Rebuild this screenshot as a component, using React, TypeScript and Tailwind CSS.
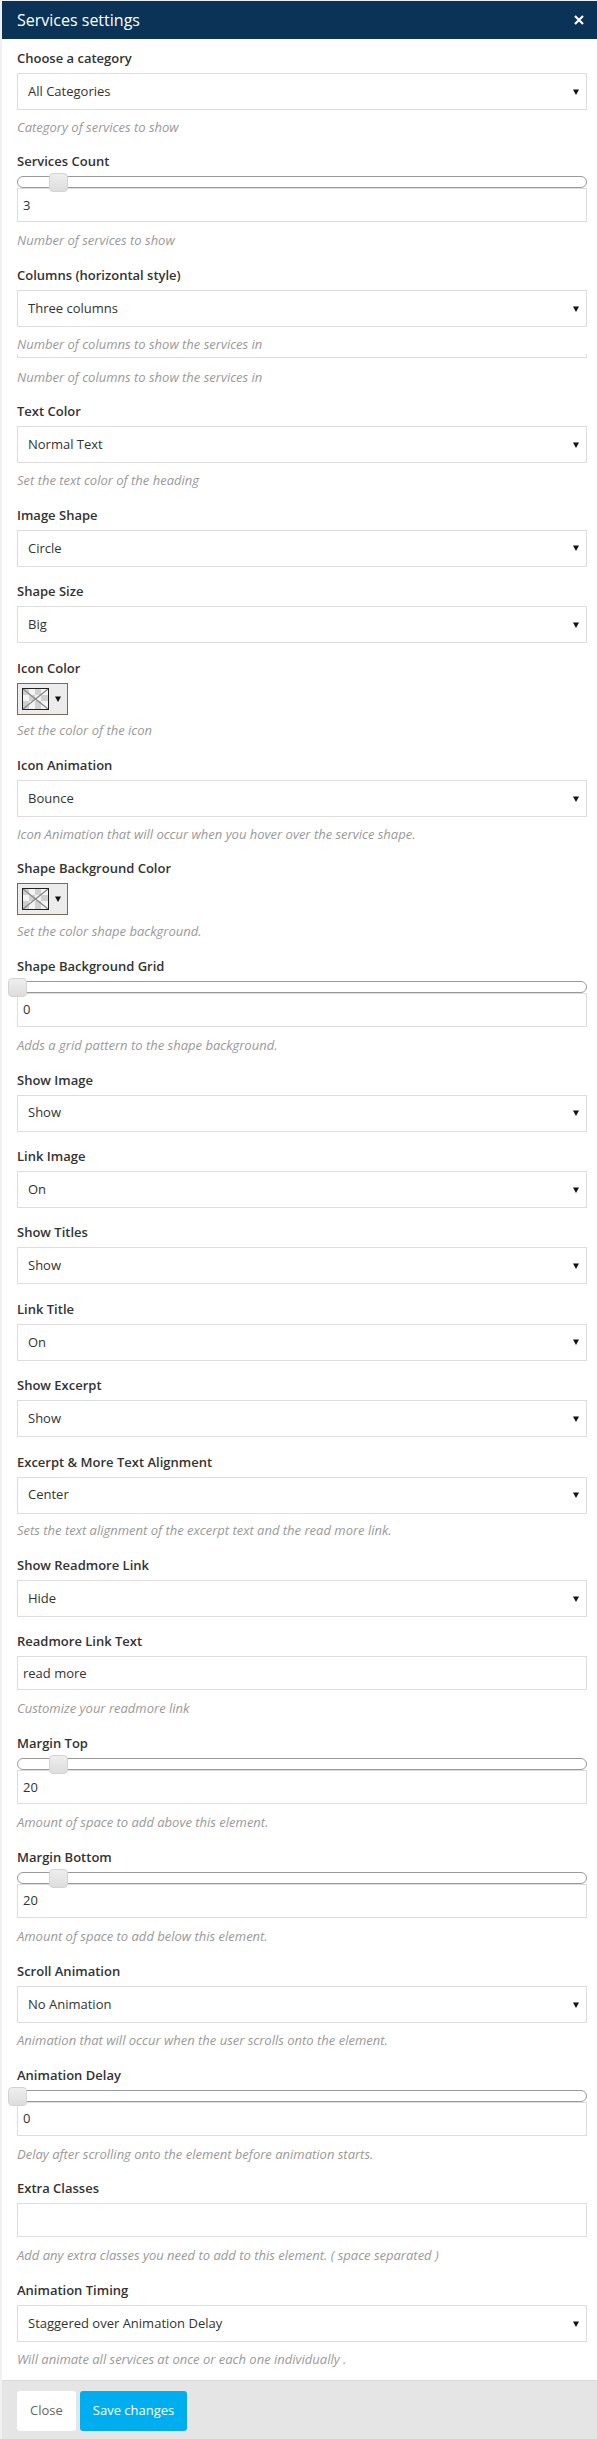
import React from "react";

function Label({ children }: { children: React.ReactNode }) {
  return (
    <div className="text-[13px] font-semibold leading-[18px] text-[#333] mb-[6px]">
      {children}
    </div>
  );
}

function Desc({ children, extra = "mt-[7.5px]" }: { children: React.ReactNode; extra?: string }) {
  return (
    <div className={"text-[13px] italic leading-[19.5px] text-[#999] " + extra}>{children}</div>
  );
}

function Arrow() {
  return (
    <svg width="6" height="6" viewBox="0 0 6 6" className="shrink-0">
      <path d="M0 0.5H6L3 6Z" fill="#111" />
    </svg>
  );
}

function Select({ value }: { value: string }) {
  return (
    <div className="h-[37px] border border-[#ddd] bg-white flex items-center pl-[10px] pr-[7px] text-[13px] text-[#333]">
      <span className="flex-1">{value}</span>
      <Arrow />
    </div>
  );
}

function TextInput({ value }: { value: string }) {
  return (
    <div className="h-[34px] border border-[#ddd] bg-white flex items-center pl-[5px] text-[13px] text-[#333]">
      {value}
    </div>
  );
}

function Slider({ handle }: { handle: string }) {
  return (
    <div className="relative z-10 h-[12px] border border-[#999] rounded-[6px] bg-white">
      <div
        className={
          "absolute top-[-4px] w-[19px] h-[19px] rounded-[4px] border border-[#d3d3d3] bg-gradient-to-b from-[#eeeeee] to-[#dddddd] " +
          handle
        }
      />
    </div>
  );
}

function ColorPicker() {
  return (
    <div className="w-[51px] h-[32px] border border-[#7a6a58] bg-[#ececec] flex items-center pl-[4px] gap-[6px]">
      <svg width="27" height="22" viewBox="0 0 27 22" className="shrink-0">
        <rect x="0" y="0" width="27" height="22" fill="#f4f4f4" />
        <rect x="1" y="1" width="6" height="6" fill="#cfcfcf" />
        <rect x="13" y="1" width="6" height="6" fill="#cfcfcf" />
        <rect x="7" y="7" width="6" height="6" fill="#cfcfcf" />
        <rect x="19" y="7" width="7" height="6" fill="#cfcfcf" />
        <rect x="1" y="13" width="6" height="8" fill="#cfcfcf" />
        <rect x="13" y="13" width="6" height="8" fill="#cfcfcf" />
        <line x1="1" y1="1" x2="26" y2="21" stroke="#8a8a8a" strokeWidth="1.4" />
        <line x1="26" y1="1" x2="1" y2="21" stroke="#8a8a8a" strokeWidth="1.4" />
        <rect x="0.5" y="0.5" width="26" height="21" fill="none" stroke="#222" strokeWidth="1" />
      </svg>
      <Arrow />
    </div>
  );
}

function Group({ children, last = false }: { children: React.ReactNode; last?: boolean }) {
  return <div className={last ? "" : "mb-[15.4px]"}>{children}</div>;
}

export default function App() {
  return (
    <div className="min-h-screen bg-[#f0f0f0] pt-[1px] pl-[2px] font-['Open_Sans',sans-serif]">
      <div className="bg-white">
        <div className="h-[38px] bg-[#0a3357] flex items-center justify-between pl-[15px] pr-[13px]">
          <span className="text-[16px] text-white">Services settings</span>
          <svg width="10" height="10" viewBox="0 0 10 10">
            <path d="M1 1L9 9M9 1L1 9" stroke="#fff" strokeWidth="2.2" />
          </svg>
        </div>

        <div className="pt-[10px] pl-[15px] pr-[10px] pb-[10.5px]">
          <Group>
            <Label>Choose a category</Label>
            <Select value="All Categories" />
            <Desc>Category of services to show</Desc>
          </Group>

          <Group>
            <Label>Services Count</Label>
            <Slider handle="left-[31px]" />
            <TextInput value="3" />
            <Desc extra="mt-[9px]">Number of services to show</Desc>
          </Group>

          <Group>
            <Label>Columns (horizontal style)</Label>
            <Select value="Three columns" />
            <Desc>Number of columns to show the services in</Desc>
            <div className="h-[4px] border-x border-b border-[#ddd]" />
            <Desc extra="mt-[9.3px]">Number of columns to show the services in</Desc>
          </Group>

          <Group>
            <Label>Text Color</Label>
            <Select value="Normal Text" />
            <Desc>Set the text color of the heading</Desc>
          </Group>

          <Group>
            <Label>Image Shape</Label>
            <Select value="Circle" />
          </Group>

          <Group>
            <Label>Shape Size</Label>
            <Select value="Big" />
          </Group>

          <Group>
            <Label>Icon Color</Label>
            <ColorPicker />
            <Desc extra="mt-[6.5px]">Set the color of the icon</Desc>
          </Group>

          <Group>
            <Label>Icon Animation</Label>
            <Select value="Bounce" />
            <Desc>Icon Animation that will occur when you hover over the service shape.</Desc>
          </Group>

          <Group>
            <Label>Shape Background Color</Label>
            <ColorPicker />
            <Desc extra="mt-[6.5px]">Set the color shape background.</Desc>
          </Group>

          <Group>
            <Label>Shape Background Grid</Label>
            <Slider handle="left-[-10px]" />
            <TextInput value="0" />
            <Desc extra="mt-[9px]">Adds a grid pattern to the shape background.</Desc>
          </Group>

          <Group>
            <Label>Show Image</Label>
            <Select value="Show" />
          </Group>

          <Group>
            <Label>Link Image</Label>
            <Select value="On" />
          </Group>

          <Group>
            <Label>Show Titles</Label>
            <Select value="Show" />
          </Group>

          <Group>
            <Label>Link Title</Label>
            <Select value="On" />
          </Group>

          <Group>
            <Label>Show Excerpt</Label>
            <Select value="Show" />
          </Group>

          <Group>
            <Label>Excerpt &amp; More Text Alignment</Label>
            <Select value="Center" />
            <Desc>Sets the text alignment of the excerpt text and the read more link.</Desc>
          </Group>

          <Group>
            <Label>Show Readmore Link</Label>
            <Select value="Hide" />
          </Group>

          <Group>
            <Label>Readmore Link Text</Label>
            <TextInput value="read more" />
            <Desc extra="mt-[9px]">Customize your readmore link</Desc>
          </Group>

          <Group>
            <Label>Margin Top</Label>
            <Slider handle="left-[31px]" />
            <TextInput value="20" />
            <Desc extra="mt-[9px]">Amount of space to add above this element.</Desc>
          </Group>

          <Group>
            <Label>Margin Bottom</Label>
            <Slider handle="left-[31px]" />
            <TextInput value="20" />
            <Desc extra="mt-[9px]">Amount of space to add below this element.</Desc>
          </Group>

          <Group>
            <Label>Scroll Animation</Label>
            <Select value="No Animation" />
            <Desc>Animation that will occur when the user scrolls onto the element.</Desc>
          </Group>

          <Group>
            <Label>Animation Delay</Label>
            <Slider handle="left-[-10px]" />
            <TextInput value="0" />
            <Desc extra="mt-[9px]">Delay after scrolling onto the element before animation starts.</Desc>
          </Group>

          <Group>
            <Label>Extra Classes</Label>
            <TextInput value="" />
            <Desc extra="mt-[9px]">Add any extra classes you need to add to this element. ( space separated )</Desc>
          </Group>

          <Group last>
            <Label>Animation Timing</Label>
            <Select value="Staggered over Animation Delay" />
            <Desc>Will animate all services at once or each one individually .</Desc>
          </Group>
        </div>

        <div className="h-[59px] border-t border-[#d8d8d8] bg-[#e5e5e5] pt-[10px] pl-[15px] flex items-start gap-[4px]">
          <button className="h-[40px] px-[13px] bg-white rounded-[3px] text-[13px] text-[#666]">Close</button>
          <button className="h-[40px] px-[13px] bg-[#00aeef] rounded-[3px] text-[13px] text-white">Save changes</button>
        </div>
      </div>
    </div>
  );
}
